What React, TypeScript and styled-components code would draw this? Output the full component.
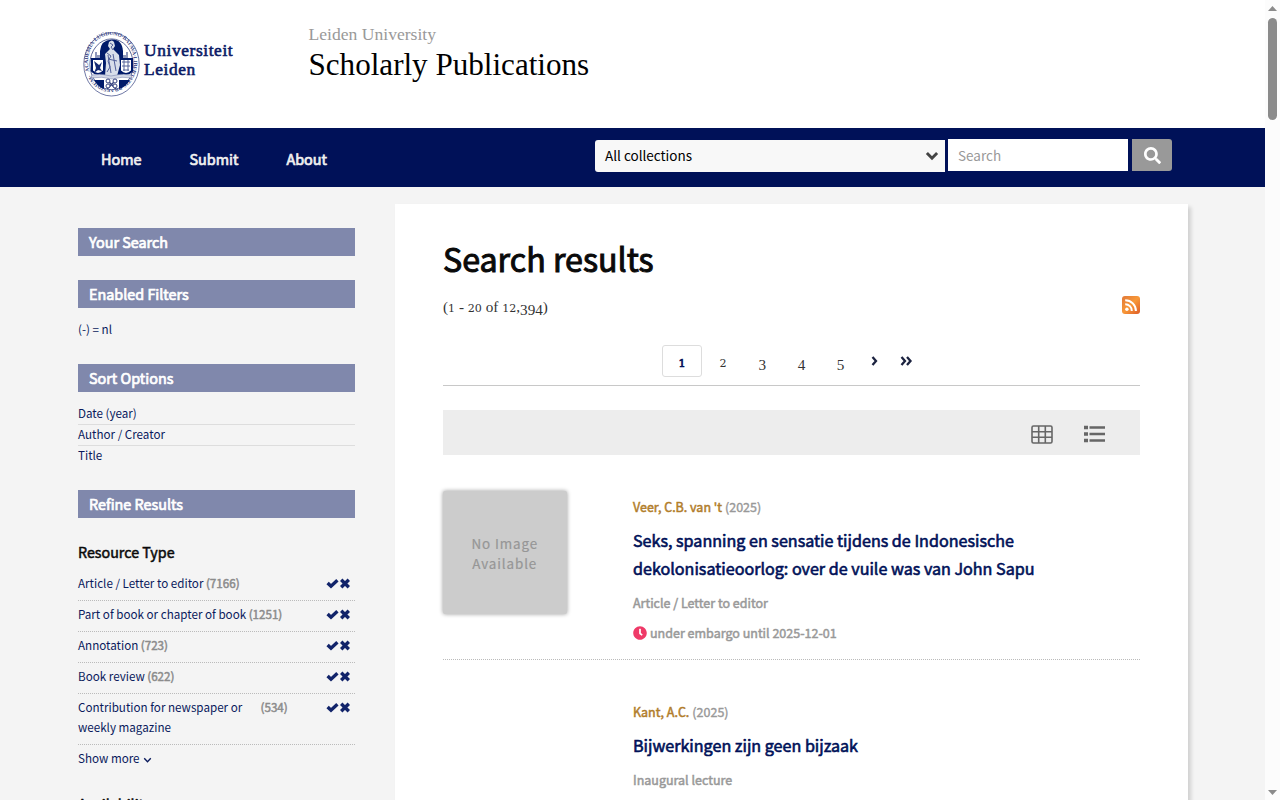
import React from "react";
import styled, { createGlobalStyle } from "styled-components";
import { FaSearch, FaClock } from "react-icons/fa";

const sans = `"Noto Sans CJK SC", sans-serif`;
const serif = `"Liberation Serif", serif`;

const Global = createGlobalStyle`
  *{box-sizing:border-box}
  body{margin:0;background:#f4f4f4;font-family:${sans};color:#0a0a0a}
  h1,h2,h3,p,ul{margin:0;padding:0;font-weight:400}
  ul{list-style:none}
`;

const T = styled.span<{ $s: number; $ls?: number; $b?: number; $c?: string; $f?: string }>`
  font-size:${p => p.$s}px;
  letter-spacing:${p => p.$ls ?? 0}px;
  -webkit-text-stroke:${p => p.$b ?? 0}px currentColor;
  font-family:${p => p.$f ?? "inherit"};
  color:${p => p.$c ?? "inherit"};
  white-space:nowrap;
`;

const Window = styled.div`display:flex;width:1280px;height:800px;overflow:hidden;`;
const Page = styled.div`width:1265px;height:800px;overflow:hidden;`;
const Header = styled.header`height:128px;background:#fff;display:flex;padding:32px 0 0 83px;`;
const Wordmark = styled.div`display:flex;flex-direction:column;width:164.500px;margin:9px 0 0 4px;line-height:19px;color:#0a1a66;`;
const Titles = styled.div`display:flex;flex-direction:column;margin-top:-9px;`;
const Sub = styled.div`line-height:20px;height:20px;`;
const Main = styled.div`line-height:40px;padding-top:2px;`;

const Nav = styled.nav`height:59px;background:#001158;display:flex;color:#f0f0f0;`;
const Links = styled.div`display:flex;width:595px;padding-left:101px;gap:48px;line-height:62px;`;
const Select = styled.div`width:350px;height:32px;margin:12px 3px 0 0;background:#f8f8f8;border-radius:3px 0 0 3px;padding:0 6px 0 10px;color:#000;display:flex;line-height:30px;justify-content:space-between;svg{margin-top:11px}`;
const Input = styled.div`display:flex;width:180px;height:32px;margin:11px 4px 0 0;background:#fff;padding-left:10px;line-height:32px;`;
const Button = styled.div`width:40px;height:32px;margin-top:11px;background:#999;border-radius:0 3px 3px 0;display:flex;align-items:center;justify-content:center;color:#fff;font-size:17px;`;

const Body = styled.div`display:flex;padding:17px 0 0 78px;`;
const Side = styled.aside`width:277px;margin:24px 40px 0 0;color:#0a1a5c;`;
const Bar = styled.h2`height:28px;line-height:27px;background:#8088ac;color:#fff;padding-left:11px;margin-bottom:24px;display:flex;`;
const Filter = styled.div`height:20px;line-height:18px;margin:-12px 0 24px;display:flex;`;
const Sorts = styled.ul`margin:-12px 0 24px;`;
const Sort = styled.li`height:21px;line-height:18px;border-bottom:1px solid #ddd;display:flex;&:last-child{border:0;height:20px}`;
const FacetTitle = styled.h3`line-height:20px;height:22px;color:#0a0a0a;display:flex;`;
const Facets = styled.ul`margin-top:6px;`;
const Facet = styled.li<{ $h?: number }>`height:${p => p.$h ?? 31}px;border-bottom:1px dotted #bbb;line-height:20px;padding-top:3px;display:flex;gap:2.500px;`;
const Wrapped = styled.div`width:180px;display:flex;flex-direction:column;`;
const Marks = styled.span`display:flex;margin:5px 5px 0 auto;gap:1px;`;
const More = styled.div`height:31px;line-height:20px;display:flex;align-items:flex-start;gap:3px;padding-top:3px;margin-bottom:18px;svg{margin-top:9px}`;

const Card = styled.main`width:793px;height:620px;background:#fff;padding:33px 48px 0;box-shadow:3px 3px 4px rgba(0,0,0,.15);`;
const H1 = styled.h1`height:42px;line-height:42px;display:flex;`;
const Count = styled.div`height:20px;margin-top:17px;display:flex;justify-content:space-between;line-height:21px;color:#333;`;
const Pager = styled.div`height:50px;margin-top:20px;padding:9px 0 0 219px;border-bottom:1px solid #c8c8c8;display:flex;color:#333;`;
const PageNo = styled.div<{ $on?: boolean; $w: number }>`width:${p => p.$w}px;height:32px;border:1px solid ${p => (p.$on ? "#ddd" : "transparent")};margin-right:${p => (p.$on ? 1.5 : 0)}px;border-radius:3px;display:flex;justify-content:center;line-height:31px;color:${p => (p.$on ? "#001158" : "#333")};`;
const Tools = styled.div`height:45px;margin-top:24px;background:#ededed;display:flex;padding:15px 0 0 588px;gap:31px;`;
const Item = styled.article<{ $h: number }>`height:${p => p.$h}px;display:flex;border-bottom:1px dotted #bbb;`;
const ThumbCol = styled.div`width:190px;padding-top:35.500px;`;
const Thumb = styled.div`width:123.500px;height:123.500px;background:#ccc;border-radius:2px;box-shadow:0 0 4px rgba(0,0,0,.4);color:#969696;text-align:center;padding-top:42px;line-height:20px;display:flex;flex-direction:column;`;
const Info = styled.div`padding-top:41px;`;
const Line = styled.div<{ $h: number; $m?: number }>`height:${p => p.$h}px;line-height:${p => p.$h}px;margin-top:${p => p.$m ?? 0}px;display:flex;align-items:center;gap:3px;color:#999;`;
const LowDigits = styled.span`font-family:"DejaVu Serif",serif;font-size:.73em;line-height:1;`;
const DropDigits = styled.span`display:inline-block;line-height:1;vertical-align:-.2em;`;

/* Old-style figures: 0-2 stand at x-height, the rest descend below the baseline. */
const OldStyle = ({ text }: { text: string }) => (
  <span>{(text.match(/[0-2]+|[3-9]+|[^0-9]+/g) ?? []).map((t, i) =>
    /[0-2]/.test(t) ? <LowDigits key={i}>{t}</LowDigits> : /[3-9]/.test(t) ? <DropDigits key={i}>{t}</DropDigits> : t)}</span>
);

const Track = styled.div`width:15px;height:800px;background:#fcfcfc;display:flex;flex-direction:column;align-items:center;justify-content:space-between;padding:6px 0 5px;`;
const Grip = styled.div`width:9px;height:102px;border-radius:5px;background:#8b8b8b;margin:7px 0 auto;`;

const Chevron = ({ w, sw, c = "#444" }: { w: number; sw: number; c?: string }) => (
  <svg width={w} height={w * 0.7} viewBox="0 0 14 10"><path d="M1.800 2 7 7.400 12.200 2" fill="none" stroke={c} strokeWidth={sw} /></svg>
);

const Seal = () => (
  <svg width="57" height="65" viewBox="0 0 57 65">
    <defs><path id="ring" d="M6.500 39.300A22.800 26.800 0 1 1 6.600 39.600" /></defs>
    <ellipse cx="28.500" cy="32.300" rx="27.700" ry="31.700" fill="#fff" stroke="#4a568e" strokeWidth=".8" />
    <text fontFamily="Liberation Serif" fontSize="5.600" fontWeight="700" fill="#3a4786"><textPath href="#ring" textLength="152">ACADEMIA·LUGDUNO·BATAVA·LIBERTATIS·PRAESIDIUM·</textPath></text>
    <ellipse cx="28.500" cy="32.300" rx="21.600" ry="25.400" fill="#fff" stroke="#35427f" strokeWidth=".8" />
    <path d="M17 43V19Q18 8 28.500 7.500T40 19v24z" fill="#001a6a" />
    <path d="M12 20h2v3h3v4h-5zM45 20h-2v3h-3v4h5z" fill="#8e98bb" />
    <path d="M9 27h12v12q-6 6-12 0zM37 27h12v12q-6 6-12 0z" fill="#fff" stroke="#001a6a" strokeWidth="2" />
    <path d="m11 29 5 4 3-3-2 6 2 3-4-1-4 3 2-5z" fill="#152a73" />
    <path d="M39 30h8M39 34h8M40 38h6M41 28v11M45 28v11" stroke="#56649a" />
    <path d="M26 10q3-3 5 0l1 4-2 3 6 6 1 10-3 11H22l1-13-1-9 5-5-2-3z" fill="#d8deea" />
    <path d="m27 11 3 2-2 2 2 3m-5 5 3 18m2-19 3 17m-8-12 9 2M24 21l4 3-3 5 2 6-3 5" fill="none" stroke="#52609a" />
    <path d="M9 43q9-2 19 1 10-3 20-1l1 3q-10-2-20 1-10-3-21-1z" fill="#d2d7e6" stroke="#6d79a7" strokeWidth=".5" />
    <path d="M11 48h10v9q-6-2-10-9M47 48H36v9q7-2 11-9" fill="#001a6a" />
    <path d="m24 57 9-9m-9 0 9 9" stroke="#35427f" strokeWidth="1.500" />
    <g fill="#fff" stroke="#35427f"><circle cx="25" cy="49" r="2" /><circle cx="32" cy="49" r="2" /><circle cx="25" cy="54" r="2" /><circle cx="32" cy="54" r="2" /></g>
  </svg>
);

const Rss = () => (
  <svg width="18" height="18" viewBox="0 0 18 18">
    <defs><linearGradient id="o" x2="1" y2="1"><stop stopColor="#e07838" /><stop offset=".5" stopColor="#f89838" /><stop offset="1" stopColor="#dd5c28" /></linearGradient></defs>
    <rect width="18" height="18" rx="3" fill="url(#o)" />
    <circle cx="4.900" cy="13.200" r="1.700" fill="#fff" />
    <path d="M3.200 8.200a6.600 6.600 0 0 1 6.600 6.700M3.200 4.200A10.700 10.700 0 0 1 13.900 15" fill="none" stroke="#fff" strokeWidth="2" />
  </svg>
);

const facets: [string, string][] = [["Article / Letter to editor", "(7166)"], ["Part of book or chapter of book", "(1251)"], ["Annotation", "(723)"], ["Book review", "(622)"]];
const Mark = () => (
  <Marks>
    <svg width="13" height="11" viewBox="0 0 13 11"><path d="M1.600 5 5 8.200 11.400 2.300" fill="none" stroke="#12246a" strokeWidth="3.400" /></svg>
    <svg width="10" height="11" viewBox="0 0 10 11"><path d="m1.200 1.700 7.600 7.600m0-7.600-7.600 7.600" fill="none" stroke="#12246a" strokeWidth="3.400" /></svg>
  </Marks>
);
const SideText = ({ children }: { children: React.ReactNode }) => <T $s={11.63}>{children}</T>;
const Num = ({ children }: { children: React.ReactNode }) => <T $s={11.63} $b={0.5} $c="#8c8c8c">{children}</T>;
const BarTitle = ({ children }: { children: string }) => <Bar><T $s={14.38} $b={0.7}>{children}</T></Bar>;

export default function App() {
  return (
    <Window>
      <Global />
      <Page>
        <Header>
          <Seal />
          <Wordmark>
            <T $s={17.4} $f={serif} $b={0.6} $ls={0.6}>Universiteit</T>
            <T $s={17.4} $f={serif} $b={0.6} $ls={0.6}>Leiden</T>
          </Wordmark>
          <Titles>
            <Sub><T $s={17.6} $f={serif} $c="#999">Leiden University</T></Sub>
            <Main><T $s={31.1} $f={serif} $c="#000">Scholarly Publications</T></Main>
          </Titles>
        </Header>
        <Nav>
          <Links>{["Home", "Submit", "About"].map(x => <T key={x} $s={14.4} $b={0.7}>{x}</T>)}</Links>
          <Select><T $s={13.5}>All collections</T><Chevron w={14} sw={3} /></Select>
          <Input><T $s={13.5} $c="#999">Search</T></Input>
          <Button><FaSearch /></Button>
        </Nav>
        <Body>
          <Side>
            <BarTitle>Your Search</BarTitle>
            <BarTitle>Enabled Filters</BarTitle>
            <Filter><SideText>(-) = nl</SideText></Filter>
            <BarTitle>Sort Options</BarTitle>
            <Sorts>{["Date (year)", "Author / Creator", "Title"].map(x => <Sort key={x}><SideText>{x}</SideText></Sort>)}</Sorts>
            <BarTitle>Refine Results</BarTitle>
            <FacetTitle><T $s={14.3} $b={0.5}>Resource Type</T></FacetTitle>
            <Facets>
              {facets.map(([a, b]) => <Facet key={a}><SideText>{a}</SideText><Num>{b}</Num><Mark /></Facet>)}
              <Facet $h={51}><Wrapped><SideText>Contribution for newspaper or</SideText><SideText>weekly magazine</SideText></Wrapped><Num>(534)</Num><Mark /></Facet>
            </Facets>
            <More><SideText>Show more</SideText><Chevron w={9} sw={2.2} c="#0a1a5c" /></More>
            <FacetTitle><T $s={14.3} $b={0.5}>Availability</T></FacetTitle>
          </Side>
          <Card>
            <H1><T $s={32.2} $b={1}>Search results</T></H1>
            <Count><T $s={15.2} $f={serif}><OldStyle text="(1 - 20 of 12,394)" /></T><Rss /></Count>
            <Pager>
              <PageNo $on $w={40}><T $s={15.2} $b={0.7} $f={serif}><OldStyle text="1" /></T></PageNo>
              {["2", "3", "4", "5"].map(n => <PageNo key={n} $w={39.2}><T $s={15.2} $f={serif}><OldStyle text={n} /></T></PageNo>)}
              <svg width="60" height="32" viewBox="1.500 0 60 32"><path d="m14 12 3.500 4-3.500 4M43 12l3.500 4-3.500 4M48.500 12l3.500 4-3.500 4" fill="none" stroke="#1c2340" strokeWidth="2.300" /></svg>
            </Pager>
            <Tools>
              <svg width="22" height="19" viewBox="0 0 22 19"><path d="M2.500 1h17q1.500 0 1.500 1.500v14q0 1.500-1.500 1.500h-17Q1 18 1 16.500v-14Q1 1 2.500 1M1 6.700h20M1 12.300h20M7.700 1v17M14.300 1v17" fill="none" stroke="#666" strokeWidth="1.600" /></svg>
              <svg width="21" height="18" viewBox="0 0 21 18"><path d="M0 2.500h4M0 9h4M0 15.500h4" stroke="#666" strokeWidth="3.500" /><path d="M5.500 2.500H21M5.500 9H21M5.500 15.500H21" stroke="#666" strokeWidth="2.300" /></svg>
            </Tools>
            <Item $h={205}>
              <ThumbCol><Thumb><T $s={13.4} $ls={0.9} $b={0.2}>No Image</T><T $s={13.4} $ls={0.9} $b={0.2}>Available</T></Thumb></ThumbCol>
              <Info>
                <Line $h={22}><T $s={12.5} $b={0.5} $c="#b17d2b">Veer, C.B. van 't</T><T $s={12.5} $b={0.4}>(2025)</T></Line>
                <Line $h={28} $m={8}><T $s={16.13} $b={0.6} $c="#001158">Seks, spanning en sensatie tijdens de Indonesische</T></Line>
                <Line $h={28}><T $s={16.13} $b={0.6} $c="#001158">dekolonisatieoorlog: over de vuile was van John Sapu</T></Line>
                <Line $h={22} $m={10}><T $s={12.5} $b={0.5}>Article / Letter to editor</T></Line>
                <Line $h={22} $m={8}><FaClock size={14} color="#ef3a68" /><T $s={12.52} $b={0.5}>under embargo until 2025-12-01</T></Line>
              </Info>
            </Item>
            <Item $h={205}>
              <ThumbCol />
              <Info>
                <Line $h={22}><T $s={12.5} $b={0.5} $c="#b17d2b">Kant, A.C.</T><T $s={12.5} $b={0.4}>(2025)</T></Line>
                <Line $h={28} $m={8}><T $s={16.13} $b={0.6} $c="#001158">Bijwerkingen zijn geen bijzaak</T></Line>
                <Line $h={22} $m={10}><T $s={12.5} $b={0.5}>Inaugural lecture</T></Line>
              </Info>
            </Item>
          </Card>
        </Body>
      </Page>
      <Track>
        <svg width="9" height="5"><path d="M4.500 0 9 5H0z" fill="#8b8b8b" /></svg>
        <Grip />
        <svg width="9" height="5"><path d="M0 0h9L4.500 5z" fill="#8b8b8b" /></svg>
      </Track>
    </Window>
  );
}
